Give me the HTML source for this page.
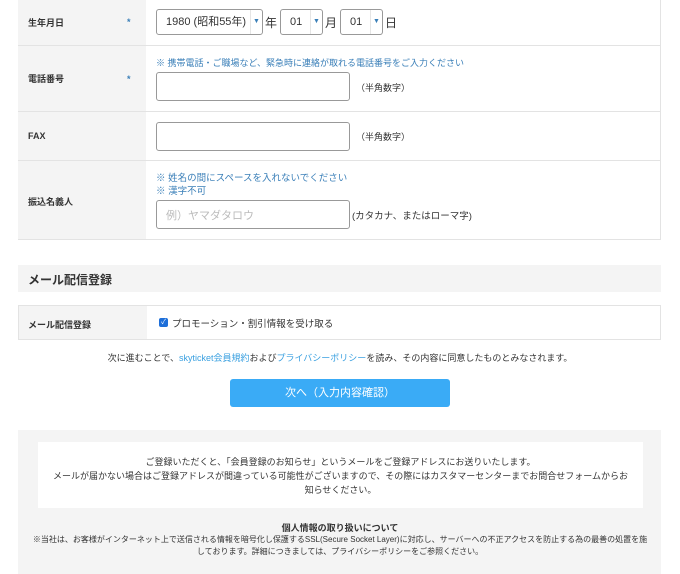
<!DOCTYPE html>
<html><head><meta charset="utf-8"><style>
*{margin:0;padding:0;box-sizing:border-box}
body{width:680px;height:574px;overflow:hidden;background:#fff;font-family:"Liberation Sans","Noto Sans CJK JP",sans-serif;color:#333;position:relative}
.a{position:absolute}
.lab{background:#f4f4f4}
.l{font-size:9px;font-weight:bold;color:#333}
.t{font-size:9.5px;color:#333;white-space:nowrap}
.n{font-size:9px;color:#3a7fb8;white-space:nowrap}
.box{border:1px solid #999;border-radius:3px;background:#fff}
.hl{height:1px;background:#e3e3e3}
.sel{border:1px solid #999;border-radius:3px;background:#fff;font-size:11px;padding-left:9px;line-height:24px}
.sel i{position:absolute;right:0;top:0;bottom:0;width:12px;border-left:1px solid #e5e5e5;font-style:normal;font-size:7px;color:#3a7fb8;text-align:center;line-height:24px}
</style></head><body>
<div class="a lab" style="left:18px;top:0;width:128px;height:240px"></div>
<div class="a" style="left:18px;top:239px;width:643px;height:1px;background:#e3e3e3"></div>
<div class="a" style="left:660px;top:0;width:1px;height:240px;background:#e3e3e3"></div>
<div class="a hl" style="left:18px;top:45px;width:643px"></div>
<div class="a hl" style="left:18px;top:111px;width:643px"></div>
<div class="a hl" style="left:18px;top:160px;width:643px"></div>

<div class="a l" style="left:28px;top:16px">生年月日</div>
<div class="a l" style="left:127px;top:17px;color:#3a7fb8">*</div>
<div class="a sel" style="left:156px;top:9px;width:107px;height:26px">1980 (昭和55年)<i>▼</i></div>
<div class="a t" style="left:265px;top:14px;font-size:12px">年</div>
<div class="a sel" style="left:280px;top:9px;width:43px;height:26px">01<i>▼</i></div>
<div class="a t" style="left:325px;top:14px;font-size:12px">月</div>
<div class="a sel" style="left:340px;top:9px;width:43px;height:26px">01<i>▼</i></div>
<div class="a t" style="left:385px;top:14px;font-size:12px">日</div>

<div class="a l" style="left:28px;top:72px">電話番号</div>
<div class="a l" style="left:127px;top:74px;color:#3a7fb8">*</div>
<div class="a n" style="left:156px;top:56px">※ 携帯電話・ご職場など、緊急時に連絡が取れる電話番号をご入力ください</div>
<div class="a box" style="left:156px;top:72px;width:194px;height:29px"></div>
<div class="a t" style="left:356px;top:81px;font-size:9px">（半角数字）</div>

<div class="a l" style="left:28px;top:131px">FAX</div>
<div class="a box" style="left:156px;top:122px;width:194px;height:29px"></div>
<div class="a t" style="left:356px;top:130px;font-size:9px">（半角数字）</div>

<div class="a l" style="left:28px;top:195px">振込名義人</div>
<div class="a n" style="left:156px;top:170px;font-size:9.5px">※ 姓名の間にスペースを入れないでください</div>
<div class="a n" style="left:156px;top:183px;font-size:9.5px">※ 漢字不可</div>
<div class="a box" style="left:156px;top:200px;width:194px;height:29px;color:#bbb;font-size:11px;padding:6px 0 0 9px">例）ヤマダタロウ</div>
<div class="a t" style="left:352px;top:208px">(カタカナ、またはローマ字)</div>

<div class="a lab" style="left:18px;top:265px;width:643px;height:27px"></div>
<div class="a" style="left:28px;top:271px;font-size:12px;font-weight:bold;color:#333">メール配信登録</div>

<div class="a" style="left:18px;top:305px;width:643px;height:35px;border:1px solid #e3e3e3"></div>
<div class="a lab" style="left:19px;top:306px;width:128px;height:33px"></div>
<div class="a l" style="left:28px;top:318px">メール配信登録</div>
<div class="a" style="left:159px;top:318px;width:9px;height:9px;background:#1e6fd9;border-radius:2px;color:#fff;font-size:7px;line-height:9px;text-align:center">✓</div>
<div class="a t" style="left:172px;top:316px">プロモーション・割引情報を受け取る</div>

<div class="a t" style="left:0;width:680px;top:351px;text-align:center;font-size:9px">次に進むことで、<span style="color:#3aa0e0">skyticket会員規約</span>および<span style="color:#3aa0e0">プライバシーポリシー</span>を読み、その内容に同意したものとみなされます。</div>
<div class="a" style="left:230px;top:379px;width:220px;height:28px;background:#3aabf6;border-radius:3px;color:#fff;font-size:11px;text-align:center;line-height:28px">次へ（入力内容確認）</div>

<div class="a lab" style="left:18px;top:430px;width:643px;height:144px"></div>
<div class="a" style="left:38px;top:442px;width:605px;height:66px;background:#fff"></div>
<div class="a" style="left:38px;top:455px;width:605px;text-align:center;font-size:9px;line-height:14px;color:#333">ご登録いただくと、「会員登録のお知らせ」というメールをご登録アドレスにお送りいたします。<br>メールが届かない場合はご登録アドレスが間違っている可能性がございますので、その際にはカスタマーセンターまでお問合せフォームからお<br>知らせください。</div>
<div class="a" style="left:0;width:680px;top:521px;text-align:center;font-size:9px;font-weight:bold">個人情報の取り扱いについて</div>
<div class="a" style="left:30px;width:620px;top:534px;text-align:center;font-size:8px;line-height:12px">※当社は、お客様がインターネット上で送信される情報を暗号化し保護するSSL(Secure Socket Layer)に対応し、サーバーへの不正アクセスを防止する為の最善の処置を施しております。詳細につきましては、プライバシーポリシーをご参照ください。</div>
</body></html>
